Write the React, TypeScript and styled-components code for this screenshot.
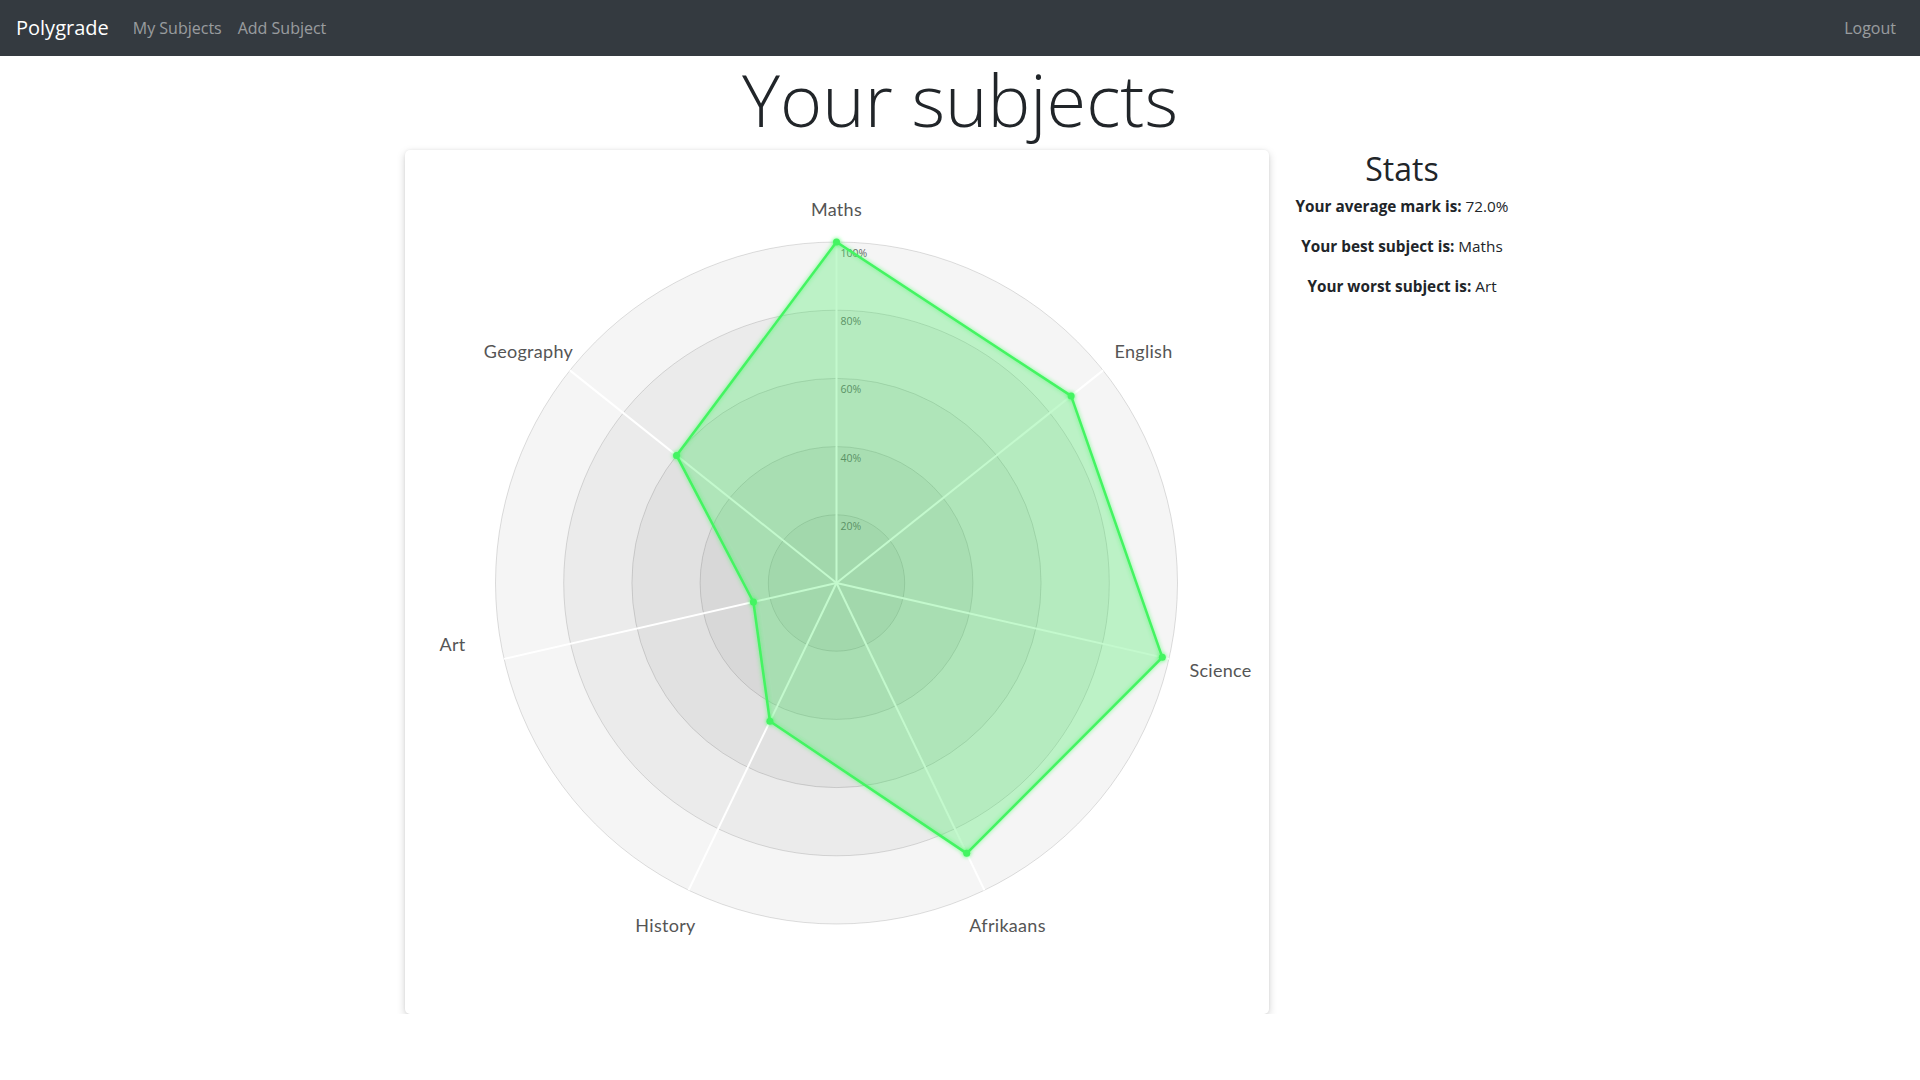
import React from "react";
import styled, { createGlobalStyle } from "styled-components";

const GlobalStyle = createGlobalStyle`
  * { box-sizing: border-box; }
  body {
    margin: 0;
    font-family: "Open Sans", "Noto Sans", sans-serif;
    font-size: 16px;
    line-height: 1.5;
    color: #212529;
    background: #fff;
  }
`;

const Navbar = styled.nav`
  height: 56px;
  background: #343a40;
  display: flex;
  align-items: center;
  padding: 0 16px;
`;

const Brand = styled.a`
  font-size: 20px;
  line-height: 30px;
  color: #fff;
  margin-right: 16px;
  text-decoration: none;
`;

const NavLink = styled.a`
  font-size: 16px;
  line-height: 24px;
  padding: 8px;
  color: rgba(255, 255, 255, 0.5);
  text-decoration: none;
`;

const Spacer = styled.div`
  flex: 1;
`;

const Title = styled.h1`
  margin: 0 0 8px;
  text-align: center;
  font-size: 72px;
  font-weight: 300;
  line-height: 1.2;
`;

const Main = styled.main`
  display: flex;
  justify-content: center;
  gap: 20px;
`;

const Card = styled.section`
  width: 864px;
  height: 864px;
  border-radius: 5px;
  background: #fff;
  box-shadow: 0 3px 8px rgba(0, 0, 0, 0.18), 0 0 3px rgba(0, 0, 0, 0.06);
`;

const StatsColumn = styled.aside`
  width: 226px;
  text-align: center;
`;

const StatsHeading = styled.h2`
  margin: 0 0 5px;
  font-size: 32px;
  font-weight: 400;
  line-height: 1.2;
`;

const StatLine = styled.p`
  margin: 0 0 16px;
  font-size: 15.3px;
  line-height: 24px;
  white-space: nowrap;
  b { font-weight: 700; }
`;

const ChartSvg = styled.svg`
  display: block;
  width: 864px;
  height: 864px;
`;

const Ring = styled.circle`
  fill: rgba(0, 0, 0, 0.038);
  stroke: rgba(0, 0, 0, 0.13);
  stroke-width: 1;
`;

const Spoke = styled.line`
  stroke: #fff;
  stroke-width: 2;
`;

const Tick = styled.text`
  font-family: "Open Sans", sans-serif;
  font-size: 10.5px;
  fill: #666;
`;

const PointLabel = styled.text`
  font-family: "Lato", "Open Sans", sans-serif;
  font-size: 18px;
  fill: #555;
  letter-spacing: 0.3px;
`;

const Area = styled.polygon`
  fill: rgba(75, 228, 110, 0.21);
  stroke: #44f462;
  stroke-width: 2.5;
  stroke-linejoin: round;
  filter: drop-shadow(0 0 2px rgba(60, 255, 90, 0.7));
`;

const Dot = styled.circle`
  fill: #44f462;
  filter: drop-shadow(0 0 2px rgba(60, 255, 90, 0.8));
`;

type Subject = { name: string; mark: number; lx: number; ly: number };

const subjects: Subject[] = [
  { name: "Maths", mark: 100, lx: 431.5, ly: 59 },
  { name: "English", mark: 88, lx: 738.5, ly: 201 },
  { name: "Science", mark: 98, lx: 815.5, ly: 520 },
  { name: "Afrikaans", mark: 88, lx: 602.5, ly: 775 },
  { name: "History", mark: 45, lx: 260.5, ly: 775 },
  { name: "Art", mark: 25, lx: 47.5, ly: 494 },
  { name: "Geography", mark: 60, lx: 123.5, ly: 201 },
];

const CX = 431.5;
const CY = 433;
const R = 341;

function pt(i: number, frac: number): [number, number] {
  const a = (i * 2 * Math.PI) / subjects.length;
  return [CX + Math.sin(a) * R * frac, CY - Math.cos(a) * R * frac];
}

function RadarChart() {
  const rings = [1, 0.8, 0.6, 0.4, 0.2];
  const poly = subjects.map((s, i) => pt(i, s.mark / 100));
  return (
    <ChartSvg viewBox="0 0 864 864">
      {rings.map((f) => (
        <Ring key={f} cx={CX} cy={CY} r={R * f} />
      ))}
      {subjects.map((s, i) => {
        const [x, y] = pt(i, 1);
        return <Spoke key={s.name} x1={CX} y1={CY} x2={x} y2={y} />;
      })}
      {[20, 40, 60, 80, 100].map((v) => (
        <Tick key={v} x={CX + 4} y={CY - (R * v) / 100 + 15}>
          {v}%
        </Tick>
      ))}
      <Area points={poly.map((p) => p.join(",")).join(" ")} />
      {poly.map(([x, y], i) => (
        <Dot key={i} cx={x} cy={y} r={3.5} />
      ))}
      {subjects.map((s) => (
        <PointLabel key={s.name} x={s.lx} y={s.ly} textAnchor="middle" dominantBaseline="central">
          {s.name}
        </PointLabel>
      ))}
    </ChartSvg>
  );
}

export default function App() {
  const avg = subjects.reduce((a, s) => a + s.mark, 0) / subjects.length;
  return (
    <>
      <GlobalStyle />
      <Navbar>
        <Brand href="#">Polygrade</Brand>
        <NavLink href="#">My Subjects</NavLink>
        <NavLink href="#">Add Subject</NavLink>
        <Spacer />
        <NavLink href="#">Logout</NavLink>
      </Navbar>
      <Title>Your subjects</Title>
      <Main>
        <Card>
          <RadarChart />
        </Card>
        <StatsColumn>
          <StatsHeading>Stats</StatsHeading>
          <StatLine>
            <b>Your average mark is:</b> {avg.toFixed(1)}%
          </StatLine>
          <StatLine>
            <b>Your best subject is:</b> Maths
          </StatLine>
          <StatLine>
            <b>Your worst subject is:</b> Art
          </StatLine>
        </StatsColumn>
      </Main>
    </>
  );
}
